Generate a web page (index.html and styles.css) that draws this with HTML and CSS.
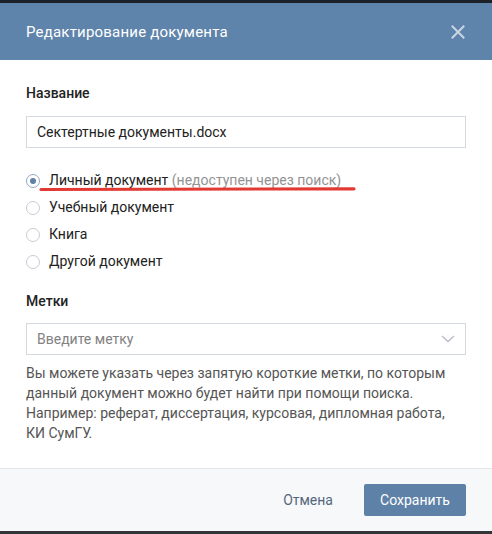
FILE: index.html
```html
<!DOCTYPE html>
<html lang="ru">
<head>
<meta charset="utf-8">
<link rel="stylesheet" href="styles.css">
</head>
<body>
<div class="topbar"></div>
<div class="modal">
  <div class="header">
    <div class="title">Редактирование документа</div>
    <svg class="close" width="14" height="14" viewBox="0 0 14 14"><path d="M1.5 1.5L12.5 12.5M12.5 1.5L1.5 12.5" stroke="#c9d5e4" stroke-width="2" stroke-linecap="square"/></svg>
  </div>
  <div class="body">
    <div class="label">Название</div>
    <div class="input">Сектертные документы.docx</div>
    <div class="radios">
      <div class="radio checked"><span class="circle"></span><span class="rtext">Личный документ <span class="muted">(недоступен через поиск)</span></span>
        <svg class="underline" width="318" height="8" viewBox="0 0 318 8"><path d="M2 4.5 Q150 3.5 315 3.8" stroke="#e23a33" stroke-width="3.2" fill="none" stroke-linecap="round"/></svg>
      </div>
      <div class="radio"><span class="circle"></span><span class="rtext">Учебный документ</span></div>
      <div class="radio"><span class="circle"></span><span class="rtext">Книга</span></div>
      <div class="radio"><span class="circle"></span><span class="rtext">Другой документ</span></div>
    </div>
    <div class="label tags">Метки</div>
    <div class="input select"><span class="placeholder">Введите метку</span>
      <svg class="chev" width="14" height="8" viewBox="0 0 14 8"><path d="M1 1L7 6.5L13 1" stroke="#b8bec6" stroke-width="1.3" fill="none"/></svg>
    </div>
    <div class="help">Вы можете указать через запятую короткие метки, по которым данный документ можно будет найти при помощи поиска. Например: реферат, диссертация, курсовая, дипломная работа, КИ СумГУ.</div>
  </div>
  <div class="footer">
    <div class="cancel">Отмена</div>
    <div class="save">Сохранить</div>
  </div>
</div>
<div class="bottombar"></div>
</body>
</html>
```
FILE: styles.css
```css
* { box-sizing: border-box; }
html, body { margin: 0; padding: 0; }
body {
  width: 492px;
  height: 534px;
  overflow: hidden;
  font-family: Roboto, "Noto Sans", sans-serif;
  font-size: 14px;
  color: #222;
  background: #fff;
  display: flex;
  flex-direction: column;
}
.topbar { height: 3px; background: #1b2029; }
.bottombar { height: 3px; background: #333538; }
.modal { flex: 1; display: flex; flex-direction: column; }
.header {
  height: 57px;
  background: #5f84ab;
  display: flex;
  align-items: center;
  justify-content: space-between;
  padding: 0 27px 0 26px;
}
.title { color: #fff; font-size: 15px; letter-spacing: 0.2px; }
.close { display: block; }
.body { padding: 24px 26px 25px 26px; flex: 1; }
.label { font-size: 14px; font-weight: 500; line-height: 18px; color: #222; }
.input {
  margin-top: 14px;
  height: 32px;
  border: 1px solid #d3d9de;
  padding: 0 10px;
  display: flex;
  align-items: center;
  font-size: 14px;
  color: #222;
}
.radios { margin-top: 19px; }
.radio {
  position: relative;
  height: 27px;
  display: flex;
  align-items: center;
  font-size: 14px;
}
.rtext { position: relative; top: -1px; }
.circle {
  width: 14px;
  height: 14px;
  border-radius: 50%;
  border: 1px solid #c5ccd5;
  margin-right: 9px;
  flex: none;
  display: flex;
  align-items: center;
  justify-content: center;
}
.checked .circle { border-color: #94a8c0; }
.checked .circle::after {
  content: "";
  width: 6px;
  height: 6px;
  border-radius: 50%;
  background: #5e81a8;
}
.muted { color: #939393; }
.underline { position: absolute; left: 13px; top: 18px; }
.tags { margin-top: 17px; }
.select { margin-top: 13px; justify-content: space-between; }
.placeholder { color: #828282; }
.help { margin-top: 8px; line-height: 20px; color: #555; font-size: 14px; }
.footer {
  height: 63px;
  border-top: 1px solid #e4e7ea;
  background: #f7f8fa;
  display: flex;
  align-items: center;
  justify-content: flex-end;
  padding: 0 26px 0 0;
}
.cancel { color: #55677d; font-size: 14px; padding: 0 31px 0 0; }
.save {
  background: #5e81a8;
  color: #fff;
  font-size: 14px;
  height: 32px;
  width: 102px;
  border-radius: 2px;
  display: flex;
  align-items: center;
  justify-content: center;
}
```
